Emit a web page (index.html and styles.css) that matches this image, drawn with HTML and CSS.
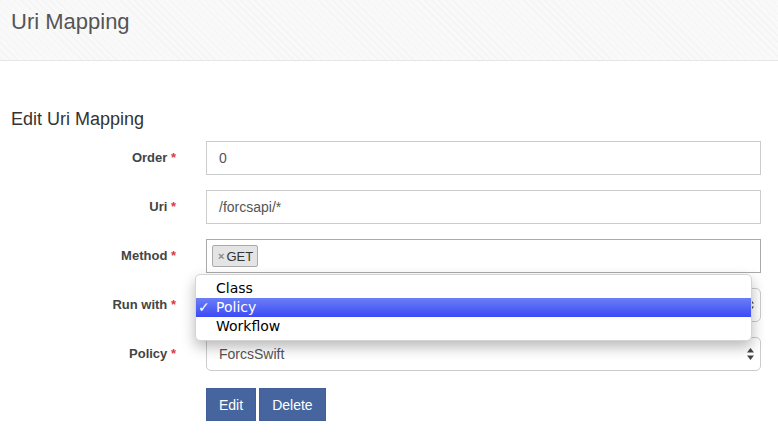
FILE: index.html
```html
<!DOCTYPE html>
<html>
<head>
<meta charset="utf-8">
<link rel="stylesheet" href="styles.css">
</head>
<body>
<header class="page-header">
  <h1 class="page-title">Uri Mapping</h1>
</header>
<main class="content">
  <h3 class="section-title">Edit Uri Mapping</h3>
  <form class="form">
    <div class="row">
      <label class="label">Order <span class="req">*</span></label>
      <div class="control"><div class="input">0</div></div>
    </div>
    <div class="row">
      <label class="label">Uri <span class="req">*</span></label>
      <div class="control"><div class="input">/forcsapi/*</div></div>
    </div>
    <div class="row">
      <label class="label">Method <span class="req">*</span></label>
      <div class="control">
        <div class="multi">
          <span class="chip"><span class="chip-x">×</span>GET</span>
        </div>
      </div>
    </div>
    <div class="row">
      <label class="label">Run with <span class="req">*</span></label>
      <div class="control">
        <div class="select select-open">
          <span class="select-text"></span>
          <svg class="arrows" width="7" height="12" viewBox="0 0 7 12"><path d="M3.5 0 L7 4.5 L0 4.5 Z M0 7.5 L7 7.5 L3.5 12 Z" fill="#444"/></svg>
        </div>
        <ul class="popup">
          <li class="opt">Class</li>
          <li class="opt opt-active"><span class="check">✓</span>Policy</li>
          <li class="opt">Workflow</li>
        </ul>
      </div>
    </div>
    <div class="row">
      <label class="label">Policy <span class="req">*</span></label>
      <div class="control">
        <div class="select">
          <span class="select-text">ForcsSwift</span>
          <svg class="arrows" width="7" height="12" viewBox="0 0 7 12"><path d="M3.5 0 L7 4.5 L0 4.5 Z M0 7.5 L7 7.5 L3.5 12 Z" fill="#444"/></svg>
        </div>
      </div>
    </div>
    <div class="row row-buttons">
      <div class="label"></div>
      <div class="control buttons">
        <button type="button" class="btn">Edit</button>
        <button type="button" class="btn">Delete</button>
      </div>
    </div>
  </form>
</main>
</body>
</html>
```
FILE: styles.css
```css
* { box-sizing: border-box; }
html, body {
  margin: 0;
  padding: 0;
  background: #fff;
  font-family: "Liberation Sans", Arial, sans-serif;
  color: #333;
}
.page-header {
  height: 61px;
  border-bottom: 1px solid #e6e6e6;
  background-color: #f8f8f8;
  background-image: repeating-linear-gradient(45deg, #f9f9f9 0 2px, #f4f4f4 2px 3px, #f9f9f9 3px 5px);
  padding: 10px 11px 0;
}
.page-title {
  margin: 0;
  font-size: 22px;
  line-height: 24px;
  font-weight: normal;
  color: #555;
}
.content {
  padding: 48px 17px 0 0;
}
.section-title {
  margin: 0 0 12px 11px;
  font-size: 18px;
  line-height: 20px;
  font-weight: normal;
  color: #333;
}
.form {
  display: flex;
  flex-direction: column;
  gap: 15px;
}
.row {
  display: flex;
  align-items: center;
}
.label {
  width: 176px;
  margin-right: 30px;
  text-align: right;
  font-size: 13px;
  font-weight: bold;
  color: #444;
  line-height: 18px;
}
.req { color: #e0393e; }
.control {
  flex: 1;
  position: relative;
}
.input {
  height: 34px;
  border: 1px solid #ccc;
  padding: 6px 12px;
  font-size: 14px;
  line-height: 20px;
  color: #555;
}
.multi {
  height: 34px;
  border: 1px solid #aaa;
  padding: 5px 5px;
  display: flex;
  align-items: center;
}
.chip {
  display: inline-flex;
  align-items: center;
  height: 22px;
  padding: 0 4px 0 5px;
  background: #e4e4e4;
  border: 1px solid #aaa;
  border-radius: 2px;
  font-size: 13px;
  color: #333;
}
.chip-x {
  color: #888;
  font-weight: bold;
  font-size: 11px;
  margin-right: 2px;
}
.select {
  height: 34px;
  border: 1px solid #ccc;
  border-radius: 5px;
  padding: 6px 12px;
  font-size: 14px;
  line-height: 20px;
  color: #555;
  display: flex;
  align-items: center;
  justify-content: space-between;
  background: #fff;
}
.arrows { margin-right: -6px; }
.popup {
  position: absolute;
  left: -11px;
  top: -14px;
  width: 557px;
  margin: 0;
  padding: 4px 0;
  list-style: none;
  background: #fff;
  border: 1px solid #d4d4d4;
  border-radius: 5px;
  box-shadow: 0 6px 14px rgba(0, 0, 0, 0.28);
  font-family: "DejaVu Sans", sans-serif;
  font-size: 14px;
  color: #000;
  z-index: 5;
}
.opt {
  height: 19px;
  line-height: 19px;
  padding-left: 20px;
  position: relative;
}
.opt-active {
  background: linear-gradient(#6a7ff7, #3c4af4);
  color: #fff;
}
.check {
  position: absolute;
  left: 2px;
  top: 0;
  font-size: 14px;
  font-weight: bold;
}
.row-buttons { margin-top: 2px; }
.buttons {
  display: flex;
  gap: 3px;
}
.btn {
  height: 33px;
  padding: 0 12px;
  border: 1px solid #41609a;
  background: #46659f;
  color: #fff;
  font-family: "Liberation Sans", Arial, sans-serif;
  font-size: 14px;
  border-radius: 0;
}
```
